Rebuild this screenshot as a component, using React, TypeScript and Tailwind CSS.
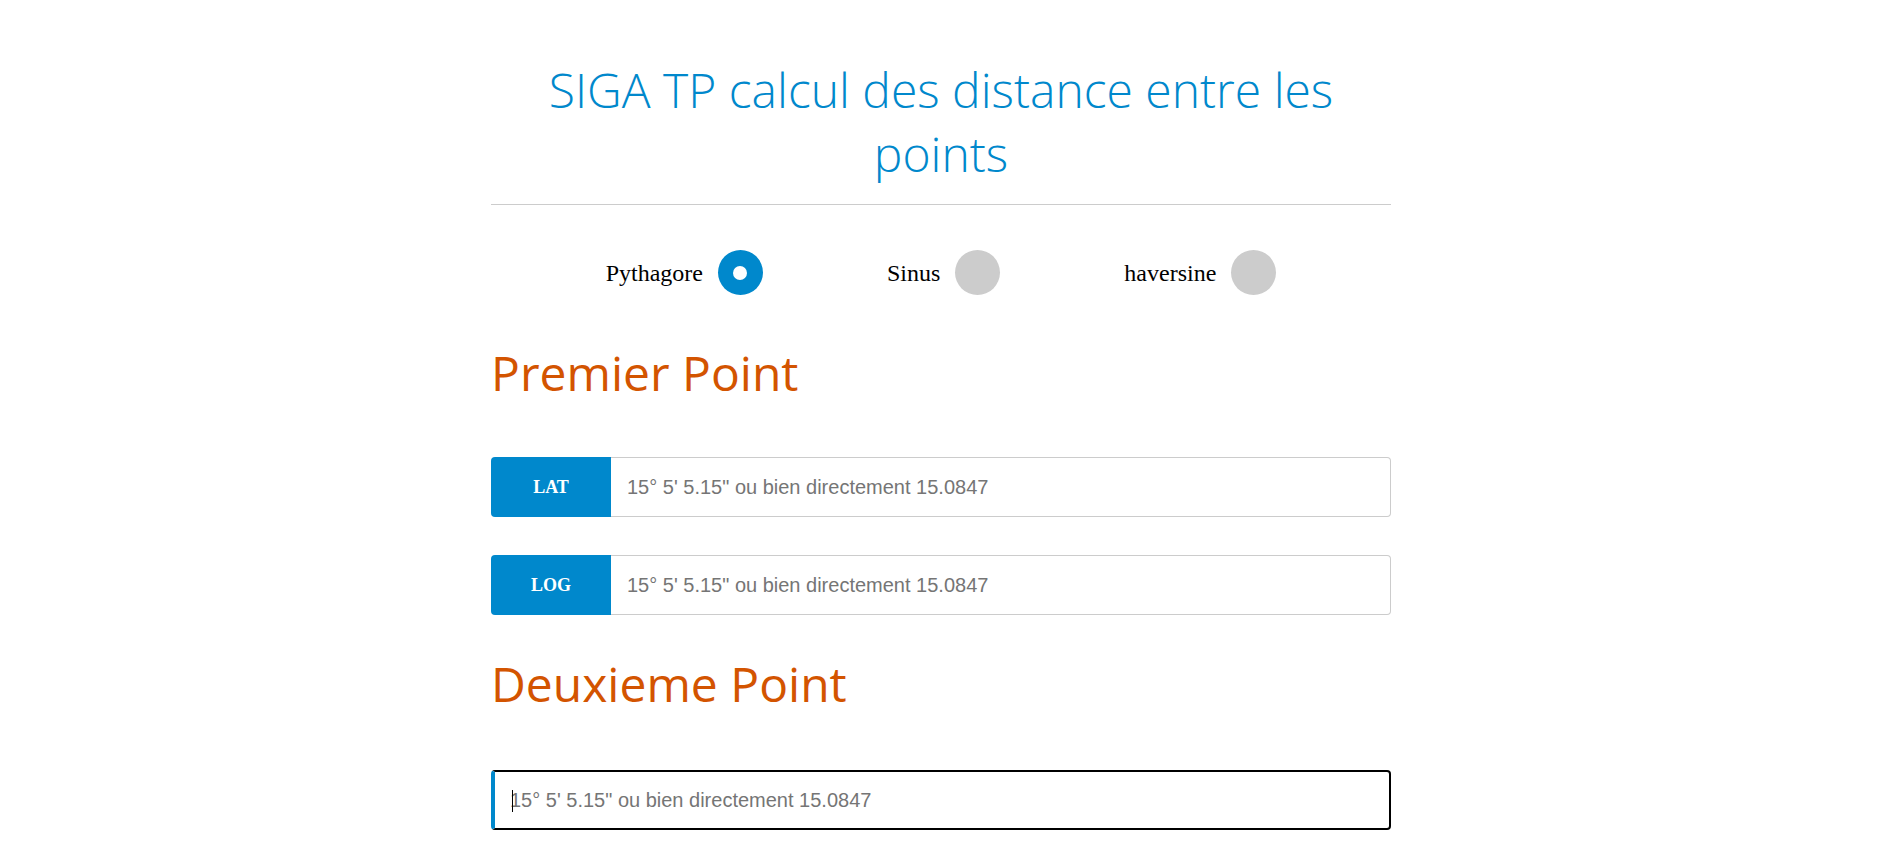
import React from "react";

function Radio({ label, checked }: { label: string; checked?: boolean }) {
  return (
    <label className="flex items-center gap-[15px] cursor-pointer">
      <span className="font-['Liberation_Serif',serif] text-[24px] text-black">{label}</span>
      {checked ? (
        <span className="w-[45px] h-[45px] rounded-full bg-[#0088cc] flex items-center justify-center">
          <span className="w-[14px] h-[14px] rounded-full bg-white" />
        </span>
      ) : (
        <span className="w-[45px] h-[45px] rounded-full bg-[#cccccc]" />
      )}
    </label>
  );
}

function AddonInput({ addon }: { addon: string }) {
  return (
    <div className="flex h-[60px]">
      <span className="w-[120px] shrink-0 bg-[#0088cc] rounded-l-[4px] flex items-center justify-center text-white font-bold text-[18px] font-['Liberation_Serif',serif]">
        {addon}
      </span>
      <input
        type="text"
        placeholder={`15° 5' 5.15" ou bien directement 15.0847`}
        className="flex-1 min-w-0 h-full border border-[#cccccc] border-l-0 rounded-r-[4px] pl-[16px] pr-4 text-[20px] font-['Liberation_Sans',Arial,sans-serif] text-[#333] placeholder:text-[#757575] outline-none bg-white"
      />
    </div>
  );
}

export default function App() {
  return (
    <div className="min-h-screen bg-white">
      <div className="w-[900px] mx-auto">
        <h1 className="pt-[58px] pb-[18px] border-b border-[#cccccc] text-center text-[48px] leading-[64px] font-light text-[#0088cc] font-['Open_Sans',sans-serif]">
          SIGA TP calcul des distance entre les points
        </h1>

        <div className="mt-[45px] h-[45px] flex items-center justify-center gap-[124px]">
          <Radio label="Pythagore" checked />
          <Radio label="Sinus" />
          <Radio label="haversine" />
        </div>

        <h2 className="mt-[46px] text-[48px] leading-[64px] font-normal text-[#d35400] font-['Open_Sans',sans-serif]">
          Premier Point
        </h2>

        <div className="mt-[52px]">
          <AddonInput addon="LAT" />
        </div>
        <div className="mt-[38px]">
          <AddonInput addon="LOG" />
        </div>

        <h2 className="mt-[37px] text-[48px] leading-[64px] font-normal text-[#d35400] font-['Open_Sans',sans-serif]">
          Deuxieme Point
        </h2>

        <div className="mt-[54px] relative h-[60px]">
          <input
            type="text"
            placeholder={`15° 5' 5.15" ou bien directement 15.0847`}
            className="w-full h-full border-2 border-black border-l-4 border-l-[#0088cc] rounded-[4px] pl-[15px] pr-4 text-[20px] font-['Liberation_Sans',Arial,sans-serif] text-[#333] placeholder:text-[#757575] outline-none bg-white"
          />
          <span className="absolute left-[21px] top-[20px] w-px h-[22px] bg-black pointer-events-none" />
        </div>
        <div className="h-[40px]" />
      </div>
    </div>
  );
}
